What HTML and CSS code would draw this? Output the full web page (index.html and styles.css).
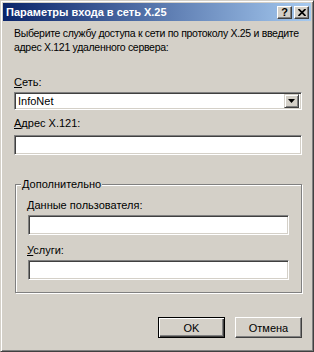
FILE: index.html
```html
<!DOCTYPE html>
<html lang="ru">
<head>
    <meta charset="UTF-8">
    <title>Параметры входа в сеть X.25</title>
    <link rel="stylesheet" href="styles.css">
</head>
<body>
    <div class="window">
        <div class="titlebar">
            <span class="title">Параметры входа в сеть X.25</span>
            <div class="caption-buttons">
                <button class="caption-btn">?</button>
                <button class="caption-btn">
                    <svg width="8" height="7" viewBox="0 0 8 7"><path d="M0.5 0 L7.5 7 M7.5 0 L0.5 7" stroke="#000" stroke-width="1.7"/></svg>
                </button>
            </div>
        </div>
        <div class="content">
            <p class="intro">Выберите службу доступа к сети по протоколу X.25 и введите<br>адрес X.121 удаленного сервера:</p>

            <label class="field-label net"><u>С</u>еть:</label>
            <div class="combo">
                <span class="combo-value">InfoNet</span>
                <span class="combo-btn">
                    <svg width="7" height="4" viewBox="0 0 7 4"><polygon points="0,0 7,0 3.5,4" fill="#000"/></svg>
                </span>
            </div>

            <label class="field-label address"><u>А</u>дрес X.121:</label>
            <input class="textbox" type="text">

            <div class="group">
                <div class="group-title">Дополнительно</div>
                <label class="field-label">Данные пользователя:</label>
                <input class="textbox" type="text">
                <label class="field-label services"><u>У</u>слуги:</label>
                <input class="textbox" type="text">
            </div>

            <div class="buttons">
                <button class="btn default">OK</button>
                <button class="btn">Отмена</button>
            </div>
        </div>
    </div>
</body>
</html>
```

FILE: styles.css
```css
:root {
    --face: #d4d0c8;
    --shadow: #808080;
    --dark: #404040;
    --light: #ffffff;
}

body {
    margin: 0;
    font-family: 'Liberation Sans', Arial, sans-serif;
    font-size: 11px;
    color: #000000;
}

.window {
    width: 314px;
    height: 352px;
    box-sizing: border-box;
    padding: 2px;
    background-color: var(--face);
    border: 1px solid;
    border-color: var(--face) var(--dark) var(--dark) var(--face);
    box-shadow: inset 1px 1px 0 var(--light), inset -1px -1px 0 var(--shadow);
}

.titlebar {
    height: 18px;
    display: flex;
    align-items: center;
    justify-content: space-between;
    padding: 0 2px 0 3px;
    background: linear-gradient(to right, #0a246a, #a6caf0);
}

.title {
    color: #ffffff;
    font-weight: bold;
    font-size: 11px;
}

.caption-buttons {
    display: flex;
    gap: 2px;
}

.caption-btn {
    width: 15px;
    height: 13px;
    padding: 0;
    display: flex;
    align-items: center;
    justify-content: center;
    background-color: var(--face);
    border: 1px solid;
    border-color: var(--light) var(--dark) var(--dark) var(--light);
    box-shadow: inset -1px -1px 0 var(--shadow);
    font-family: 'Liberation Sans', Arial, sans-serif;
    font-weight: bold;
    font-size: 11px;
    line-height: 1;
    color: #000000;
}

.content {
    padding: 5px 9px 0 11px;
}

.intro {
    margin: 0;
    line-height: 14px;
    font-size: 10.5px;
    letter-spacing: -0.3px;
    white-space: nowrap;
}

.field-label {
    display: block;
    line-height: 14px;
    margin-top: 7px;
    margin-bottom: 3px;
}

.field-label.net {
    margin-top: 21px;
}

.field-label.address {
    margin-top: 6px;
    margin-bottom: 5px;
}

.field-label.services {
    margin-top: 8px;
}

.combo,
.textbox {
    display: block;
    width: 100%;
    box-sizing: border-box;
    margin: 0;
    background-color: #ffffff;
    border: 1px solid;
    border-color: var(--shadow) var(--light) var(--light) var(--shadow);
    box-shadow: inset 1px 1px 0 var(--dark), inset -1px -1px 0 var(--face);
    outline: none;
    -webkit-appearance: none;
    appearance: none;
    border-radius: 0;
}

.textbox {
    height: 20px;
    padding: 0 3px;
    font: inherit;
}

.combo {
    height: 18px;
    display: flex;
    align-items: center;
    padding: 2px;
}

.combo-value {
    flex: 1;
    padding-left: 1px;
    line-height: 14px;
}

.combo-btn {
    width: 15px;
    height: 14px;
    box-sizing: border-box;
    display: flex;
    align-items: center;
    justify-content: center;
    background-color: var(--face);
    border: 1px solid;
    border-color: var(--face) var(--dark) var(--dark) var(--face);
    box-shadow: inset 1px 1px 0 var(--light), inset -1px -1px 0 var(--shadow);
}

.group {
    margin: 29px 0 0 1px;
    padding: 0 12px 12px 12px;
    border: 1px solid var(--shadow);
    box-shadow: inset 1px 1px 0 var(--light), 1px 1px 0 var(--light);
}

.group-title {
    display: table;
    margin: -8px 0 0 -7px;
    padding: 0 1px;
    line-height: 14px;
    background-color: var(--face);
}

.group .field-label {
    margin-left: -1px;
}

.buttons {
    display: flex;
    justify-content: flex-end;
    gap: 10px;
    margin-top: 24px;
}

.btn {
    width: 67px;
    height: 21px;
    padding: 0;
    background-color: var(--face);
    border: 1px solid;
    border-color: var(--light) var(--dark) var(--dark) var(--light);
    box-shadow: inset -1px -1px 0 var(--shadow);
    font-family: 'Liberation Sans', Arial, sans-serif;
    font-size: 11px;
    color: #000000;
    border-radius: 0;
}

.btn.default {
    border-color: #000000;
    box-shadow: inset 1px 1px 0 var(--light), inset -1px -1px 0 var(--dark), inset -2px -2px 0 var(--shadow);
}
```
